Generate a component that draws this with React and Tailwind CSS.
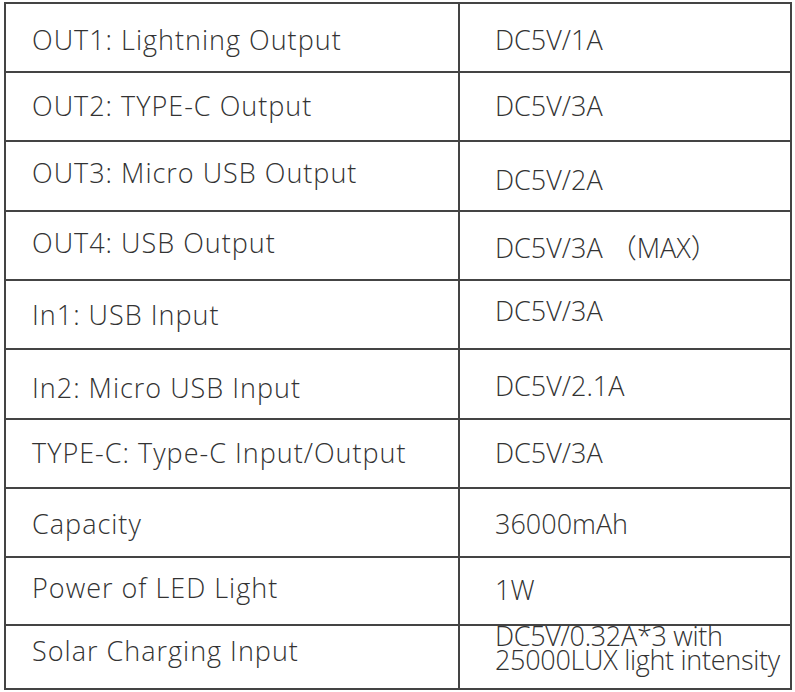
import React from "react";

const rows = [
  { h: "h-[69px]", l: "OUT1: Lightning Output", r: "DC5V/1A", lm: "mt-[23px]", rm: "mt-[23px]" },
  { h: "h-[69px]", l: "OUT2: TYPE-C Output", r: "DC5V/3A", lm: "mt-[20px]", rm: "mt-[20px]" },
  { h: "h-[70px]", l: "OUT3: Micro USB Output", r: "DC5V/2A", lm: "mt-[18px]", rm: "mt-[25px]" },
  { h: "h-[69px]", l: "OUT4: USB Output", r: "DC5V/3A （MAX）", lm: "mt-[18px]", rm: "mt-[23px]" },
  { h: "h-[69px]", l: "In1: USB Input", r: "DC5V/3A", lm: "mt-[21px]", rm: "mt-[17px]" },
  { h: "h-[70px]", l: "In2: Micro USB Input", r: "DC5V/2.1A", lm: "mt-[25px]", rm: "mt-[23px]" },
  { h: "h-[69px]", l: "TYPE-C: Type-C Input/Output", r: "DC5V/3A", lm: "mt-[20px]", rm: "mt-[20px]" },
  { h: "h-[69px]", l: "Capacity", r: "36000mAh", lm: "mt-[22px]", rm: "mt-[22px]" },
  { h: "h-[68px]", l: "Power of LED Light", r: "1W", lm: "mt-[17px]", rm: "mt-[19px]" },
];

export default function App() {
  return (
    <div
      className="bg-white w-[795px] h-[692px] pt-[2px] pl-[4px] text-[#333]"
      style={{ fontFamily: '"Open Sans", "Noto Sans CJK SC", sans-serif' }}
    >
      <div className="w-[788px] border-2 border-[#444]">
        {rows.map((row, i) => (
          <div key={i} className={`flex border-b-2 border-[#444] ${row.h}`}>
            <div className="w-[454px] shrink-0 border-r-2 border-[#444] pl-[26px]">
              <div className={`text-[27px] leading-[26px] font-light tracking-[1px] whitespace-nowrap ${row.lm}`}>
                {row.l}
              </div>
            </div>
            <div className="flex-1 pl-[35px]">
              <div className={`text-[27px] leading-[26px] font-light whitespace-nowrap ${row.rm}`}>
                {row.r}
              </div>
            </div>
          </div>
        ))}
        <div className="flex h-[62px]">
          <div className="w-[454px] shrink-0 border-r-2 border-[#444] pl-[26px]">
            <div className="text-[27px] leading-[26px] font-light tracking-[1px] whitespace-nowrap mt-[12px]">
              Solar Charging Input
            </div>
          </div>
          <div className="flex-1 pl-[35px]">
            <div className="text-[27px] leading-[24px] font-light tracking-[-0.3px] whitespace-nowrap -mt-[2px]">
              <div>DC5V/0.32A*3 with</div>
              <div>25000LUX light intensity</div>
            </div>
          </div>
        </div>
      </div>
    </div>
  );
}
